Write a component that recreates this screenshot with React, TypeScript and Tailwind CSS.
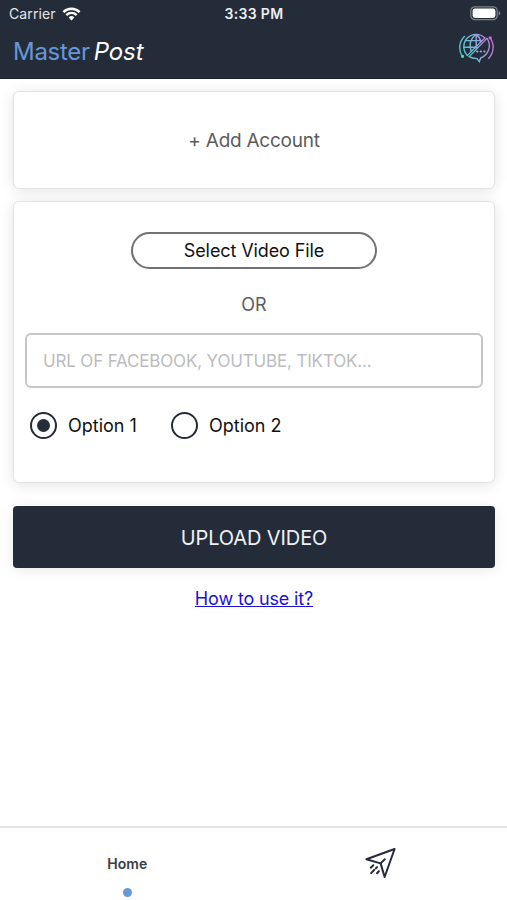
import React, { useState } from "react";

const cardClass =
  "rounded-[6px] border border-[#e2e2e2] bg-white shadow-[0_2px_14px_rgba(0,0,0,0.11)]";

function WifiIcon() {
  return (
    <svg width="19" height="14" viewBox="0 0 18 14" fill="none" stroke="#fff">
      <path d="M0.9 5.1a11.6 11.6 0 0 1 16.2 0" strokeWidth="2.5" />
      <path d="M3.8 8.1a7.4 7.4 0 0 1 10.4 0" strokeWidth="2.3" />
      <path d="M9 13.4 6.1 10.5a4.1 4.1 0 0 1 5.8 0Z" fill="#fff" stroke="none" />
    </svg>
  );
}

function BatteryIcon() {
  return (
    <svg width="31" height="15" viewBox="0 0 31 15" fill="none">
      <rect x="0.8" y="0.8" width="26.4" height="12.9" rx="4" stroke="#7d828b" strokeWidth="1.2" />
      <rect x="2.6" y="2.6" width="22.8" height="9.3" rx="2.4" fill="#fff" />
      <path d="M28.7 5v4.5c1-.4 1.6-1.2 1.6-2.2s-.6-1.9-1.6-2.3Z" fill="#7d828b" />
    </svg>
  );
}

function GlobeChatLogo() {
  return (
    <svg width="36" height="32" viewBox="0 0 36 32" fill="none" stroke="url(#logo)" strokeWidth="1.4" strokeLinecap="round">
      <defs>
        <linearGradient id="logo" x1="2" y1="20" x2="34" y2="10" gradientUnits="userSpaceOnUse">
          <stop stopColor="#49c9c5" />
          <stop offset="0.5" stopColor="#8bb0df" />
          <stop offset="1" stopColor="#c66bd0" />
        </linearGradient>
      </defs>
      {/* Outer brackets */}
      <path d="M5.4 4.5C-0.3 10-0.5 18 3.2 24.5" />
      <path d="M31.2 5.8c4.4 6.4 3.8 14.7-1.4 20.5" />
      <circle cx="3.6" cy="24.3" r="0.9" fill="#46e0bd" stroke="#46e0bd" />
      <circle cx="31.2" cy="5.8" r="0.9" fill="#d46ad8" stroke="#d46ad8" />
      {/* Globe */}
      <path d="M8.4 23.4A12.3 12.3 0 0 1 25.8 6" />
      <path d="M17.2 2.8v13.4M5 15.2h13M7 8.6h16" />
      <path d="M16.6 2.8c-6.4 5-6.4 12-4.4 16.6M17.6 2.8c2.7 1.8 3.7 4 4.2 6.8" />
      {/* Slash and speech bubble */}
      <path d="M25.8 6 8.4 23.4M28 6.4 10.2 24.6" strokeWidth="1.3" />
      <path d="M28 6.4c5 7 1.4 17-6.2 19.4l-1.5 3.8-2.3-3c-2.9-.1-5.7-.7-7.8-2" />
      <path d="M18 19.6h.4M21.6 19.6h.4M25.2 19.6h.4" strokeWidth="2" />
    </svg>
  );
}

function SendIcon() {
  return (
    <svg width="32" height="32" viewBox="0 0 32 32" fill="none" stroke="#252b38" strokeWidth="2" strokeLinejoin="round" strokeLinecap="round">
      <path d="M29.6 2 1.4 12.2l14.2 4.2L19.6 30 29.6 2Z" />
      <path d="m15.6 16.4 4.2-4.2" />
      <path d="m8.3 18.3-2.5 2.4M12.1 20.1l-1.2 1.2M9.3 22.8l-3.2 3.3M13.9 24.2l-1.9 2" />
    </svg>
  );
}

interface RadioProps {
  label: string;
  checked: boolean;
  onSelect: () => void;
}

function Radio({ label, checked, onSelect }: RadioProps) {
  return (
    <button type="button" role="radio" aria-checked={checked} onClick={onSelect} className="flex items-center gap-[11px]">
      <span className="flex size-[27px] items-center justify-center rounded-full border-2 border-[#252b38]">
        {checked && <span className="size-[13px] rounded-full bg-[#252b38]" />}
      </span>
      <span className="w-[72px] text-left text-[18px] leading-6 whitespace-nowrap text-[#111]">{label}</span>
    </button>
  );
}

export default function App() {
  const [option, setOption] = useState(1);

  return (
    <div className="flex h-[900px] w-full flex-col overflow-hidden bg-white font-[Inter,sans-serif]">
      {/* Header */}
      <header className="h-[79px] shrink-0 border-b border-[#1c222e] bg-[#252c39] text-white">
        <div className="grid h-[27px] grid-cols-3 items-center pr-[6px] pl-[9px]">
          <div className="flex items-center gap-[6px]">
            <span className="text-[14px] tracking-[0.1px] text-[#e4e6ea]">Carrier</span>
            <WifiIcon />
          </div>
          <span className="pr-[2px] text-center text-[14px] font-semibold tracking-[0.3px] text-[#eceef1]">3:33 PM</span>
          <div className="flex justify-end">
            <BatteryIcon />
          </div>
        </div>
        <div className="flex items-start justify-between pr-[12px] pl-[13px]">
          <h1 className="flex gap-[4px] pt-[9px] text-[24px] leading-8 tracking-[-0.3px]">
            <span className="text-[#6598d6]">Master</span>
            <span className="tracking-[-0.1px] italic">Post</span>
          </h1>
          <div className="pt-[5px]">
            <GlobeChatLogo />
          </div>
        </div>
      </header>

      {/* Content */}
      <main className="flex flex-1 flex-col pt-[12px] pr-[12px] pl-[13px]">
        <button type="button" className={`${cardClass} h-[98px] pt-[2px] text-[19px] tracking-[-0.25px] text-[#5c5c5c]`}>
          + Add Account
        </button>

        <section className={`${cardClass} mt-[12px] flex h-[282px] flex-col px-[11px] pt-[30px]`}>
          <button type="button" className="h-[37px] w-[246px] self-center rounded-full border-2 border-[#707276] text-[18px] tracking-[-0.1px] text-[#111]">
            Select Video File
          </button>
          <p className="mt-[24px] text-center text-[18px] leading-6 text-[#5c5c5c]">OR</p>
          <input
            type="text"
            placeholder="URL OF FACEBOOK, YOUTUBE, TIKTOK..."
            className="mt-[16px] h-[55px] w-full rounded-[6px] border-2 border-[#c6c6c6] px-[16px] text-[17px] tracking-[-0.16px] outline-none placeholder:text-[#bcbcbe]"
          />
          <div role="radiogroup" className="mt-[24px] flex gap-[31px] pl-[5px]">
            <Radio label="Option 1" checked={option === 1} onSelect={() => setOption(1)} />
            <Radio label="Option 2" checked={option === 2} onSelect={() => setOption(2)} />
          </div>
        </section>

        <button type="button" className="mt-[23px] h-[62px] rounded-[4px] bg-[#252c39] pt-[2px] text-[20px] tracking-[-0.1px] text-[#eef0f4] shadow-[0_2px_14px_rgba(0,0,0,0.09)]">
          UPLOAD VIDEO
        </button>
        <a href="#" className="mt-[19px] self-center text-[18px] leading-6 tracking-[-0.15px] text-[#1a10d8] underline">
          How to use it?
        </a>
      </main>

      {/* Bottom tabs */}
      <nav className="grid h-[74px] shrink-0 grid-cols-2 border-t-2 border-[#e3e3e3]">
        <div className="flex flex-col items-center pt-[26px] pl-px">
          <span className="text-[14px] leading-5 font-semibold tracking-[0.1px] text-[#383c46]">Home</span>
          <span className="mt-[14px] size-[9px] rounded-full bg-[#6598d6]" />
        </div>
        <div className="flex justify-center pt-[19px] pl-px">
          <SendIcon />
        </div>
      </nav>
    </div>
  );
}
